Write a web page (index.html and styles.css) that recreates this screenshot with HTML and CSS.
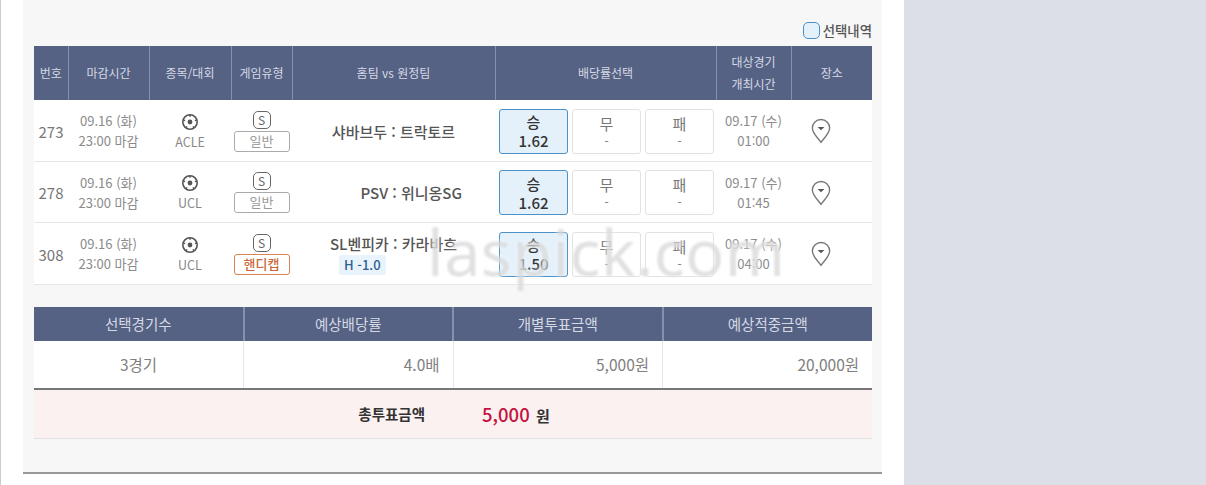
FILE: index.html
```html
<!DOCTYPE html>
<html lang="ko">
<head>
    <meta charset="UTF-8">
    <meta name="viewport" content="width=device-width, initial-scale=1.0">
    <title>선택내역</title>
    <link rel="stylesheet" href="styles.css">
</head>
<body>
    <svg class="svg-defs" width="0" height="0">
        <symbol id="ball" viewBox="0 0 18 18">
            <circle cx="9" cy="9" r="7.2" fill="none" stroke="#555" stroke-width="1.6"/>
            <circle cx="9" cy="9" r="2.4" fill="#555"/>
            <path d="M9 1.8v2M2.2 7l1.9.6M15.8 7l-1.9.6M4.8 15l1.2-1.6M13.2 15L12 13.4" stroke="#555" stroke-width="1.5"/>
        </symbol>
        <symbol id="pin" viewBox="0 0 22 28">
            <path d="M11 26.5C7 21 1.5 16.500 1.500 10.800A9.500 9.500 0 0 1 20.500 10.800C20.500 16.500 15 21 11 26.500Z" fill="none" stroke="#777" stroke-width="1.500"/>
            <path d="M7.200 9.500h7.600L11 13.200Z" fill="#555"/>
        </symbol>
    </svg>

    <div class="page">
        <div class="panel">
            <div class="legend"><span class="legend-box"></span>선택내역</div>

            <table class="games">
                <thead>
                    <tr>
                        <th class="c-no">번호</th>
                        <th class="c-close">마감시간</th>
                        <th class="c-league">종목/대회</th>
                        <th class="c-type">게임유형</th>
                        <th class="c-teams">홈팀 vs 원정팀</th>
                        <th class="c-odds">배당률선택</th>
                        <th class="c-date">대상경기<br>개최시간</th>
                        <th class="c-place">장소</th>
                    </tr>
                </thead>
                <tbody>
                    <tr>
                        <td class="num">273</td>
                        <td class="times">09.16 (화)<br>23:00 마감</td>
                        <td class="league"><svg class="ball"><use href="#ball"/></svg><div>ACLE</div></td>
                        <td class="type"><span class="s-mark">S</span><span class="tag">일반</span></td>
                        <td class="teams">샤바브두 : 트락토르</td>
                        <td class="odds">
                            <div class="odds-row">
                                <div class="pick on"><b>승</b><b>1.62</b></div>
                                <div class="pick"><span>무</span><span class="dash">-</span></div>
                                <div class="pick"><span>패</span><span class="dash">-</span></div>
                            </div>
                        </td>
                        <td class="times">09.17 (수)<br>01:00</td>
                        <td class="place"><svg class="pin"><use href="#pin"/></svg></td>
                    </tr>
                    <tr>
                        <td class="num">278</td>
                        <td class="times">09.16 (화)<br>23:00 마감</td>
                        <td class="league"><svg class="ball"><use href="#ball"/></svg><div>UCL</div></td>
                        <td class="type"><span class="s-mark">S</span><span class="tag">일반</span></td>
                        <td class="teams teams-right">PSV : 위니옹SG</td>
                        <td class="odds">
                            <div class="odds-row">
                                <div class="pick on"><b>승</b><b>1.62</b></div>
                                <div class="pick"><span>무</span><span class="dash">-</span></div>
                                <div class="pick"><span>패</span><span class="dash">-</span></div>
                            </div>
                        </td>
                        <td class="times">09.17 (수)<br>01:45</td>
                        <td class="place"><svg class="pin"><use href="#pin"/></svg></td>
                    </tr>
                    <tr class="row-last">
                        <td class="num">308</td>
                        <td class="times">09.16 (화)<br>23:00 마감</td>
                        <td class="league"><svg class="ball"><use href="#ball"/></svg><div>UCL</div></td>
                        <td class="type"><span class="s-mark">S</span><span class="tag tag-hc">핸디캡</span></td>
                        <td class="teams teams-hc">
                            <div>SL벤피카 : 카라바흐</div>
                            <div class="hc-wrap"><span class="hc">H -1.0</span></div>
                        </td>
                        <td class="odds">
                            <div class="odds-row">
                                <div class="pick on"><b>승</b><b>1.50</b></div>
                                <div class="pick"><span>무</span><span class="dash">-</span></div>
                                <div class="pick"><span>패</span><span class="dash">-</span></div>
                            </div>
                        </td>
                        <td class="times">09.17 (수)<br>04:00</td>
                        <td class="place"><svg class="pin"><use href="#pin"/></svg></td>
                    </tr>
                </tbody>
            </table>

            <table class="summary">
                <thead>
                    <tr>
                        <th>선택경기수</th>
                        <th>예상배당률</th>
                        <th>개별투표금액</th>
                        <th>예상적중금액</th>
                    </tr>
                </thead>
                <tbody>
                    <tr>
                        <td class="center">3경기</td>
                        <td>4.0배</td>
                        <td>5,000원</td>
                        <td>20,000원</td>
                    </tr>
                </tbody>
            </table>

            <div class="total">
                <span class="total-label">총투표금액</span>
                <span class="total-value"><em>5,000</em> 원</span>
            </div>
        </div>
        <div class="sidebar"></div>
    </div>

    <div class="watermark">laspick.com</div>
</body>
</html>
```

FILE: styles.css
```css
html, body {
    margin: 0;
    height: 485px;
    overflow: hidden;
    background: #fff;
}
body {
    font-family: "Noto Sans CJK KR", "Noto Sans", sans-serif;
    font-size: 13px;
    color: #777;
    position: relative;
}
.svg-defs {
    position: absolute;
}
.page {
    display: flex;
    align-items: flex-start;
    height: 485px;
    border-left: 1px solid #ccc;
    padding-left: 22px;
    box-sizing: border-box;
}
.panel {
    width: 859px;
    height: 474px;
    box-sizing: border-box;
    flex: none;
    padding: 21px 10px 0 11px;
    background: #f7f7f7;
    border-bottom: 2px solid #999;
}
.sidebar {
    flex: 1;
    height: 485px;
    margin-left: 22px;
    background: #dcdfe8;
}
.legend {
    display: flex;
    justify-content: flex-end;
    align-items: center;
    gap: 3px;
    height: 18px;
    margin-bottom: 7px;
    font-size: 13.400px;
    font-weight: 500;
    color: #555;
}
.legend-box {
    width: 15px;
    height: 15px;
    border: 1.500px solid #4b91c7;
    border-radius: 5px;
    background: #e4f1fb;
}
table {
    border-collapse: collapse;
    table-layout: fixed;
    width: 838px;
}
th, td {
    box-sizing: border-box;
}
th {
    background: #556284;
    color: #d5d9e4;
    font-size: 12px;
    font-weight: 400;
    border-right: 1px solid #8391ad;
    padding: 0;
}
th:last-child {
    border-right: 0;
}
.games thead tr {
    height: 54px;
}
.games th {
    line-height: 22px;
}
.c-no { width: 34px; }
.c-close { width: 81px; }
.c-league { width: 82px; }
.c-type { width: 61px; }
.c-teams { width: 203px; }
.c-odds { width: 221px; }
.c-date { width: 75px; }
.c-place { width: 81px; }

.games tbody tr {
    height: 61px;
    background: #fff;
    border-bottom: 1px solid #e6e6e6;
}
.games tbody .row-last {
    height: 62px;
}
.games td {
    padding: 2px 0 0;
    text-align: center;
    vertical-align: middle;
}
.num {
    font-size: 15px;
    color: #777;
}
.times {
    font-size: 13px;
    line-height: 20px;
    color: #8a8a8a;
}
.league {
    font-size: 12.500px;
    line-height: 16px;
    color: #888;
}
.league div {
    margin-top: 3px;
}
.ball {
    display: block;
    width: 18px;
    height: 18px;
    margin: 0 auto;
}
.type {
    line-height: 1;
}
.s-mark {
    display: block;
    width: 16px;
    height: 16px;
    margin: 0 auto 2px;
    border: 1.500px solid #666;
    border-radius: 5px;
    font-size: 12px;
    line-height: 16px;
    color: #666;
}
.tag {
    display: block;
    box-sizing: border-box;
    width: 56px;
    height: 21px;
    margin: 0 auto;
    border: 1.500px solid #aaa;
    border-radius: 3px;
    font-size: 13px;
    line-height: 18px;
    color: #999;
}
.tag-hc {
    border-color: #d9824f;
    color: #c9673a;
    font-weight: 500;
}
.games .teams {
    font-size: 15px;
    font-weight: 500;
    color: #555;
}
.games .teams-right {
    padding-right: 33px;
    text-align: right;
}
.teams-hc {
    line-height: 19px;
}
.hc-wrap {
    text-align: left;
    padding-left: 47px;
    margin-top: 1px;
}
.hc {
    display: inline-block;
    padding: 0 5px;
    height: 20px;
    line-height: 20px;
    background: #e8f3fb;
    border-radius: 3px;
    color: #2d5f8f;
    font-size: 13px;
}
.odds-row {
    display: flex;
    justify-content: center;
    gap: 4px;
    padding-left: 2px;
}
.pick {
    width: 69px;
    height: 45px;
    box-sizing: border-box;
    display: flex;
    flex-direction: column;
    justify-content: center;
    background: #fff;
    border: 1px solid #e2e2e2;
    border-radius: 3px;
    font-size: 15px;
    line-height: 19px;
    color: #777;
}
.pick b {
    font-weight: 500;
    color: #333;
}
.pick.on {
    background: #e4f1fb;
    border-color: #4b91c7;
    border-width: 1.500px;
}
.dash {
    font-size: 12px;
    line-height: 16px;
}
.pin {
    display: block;
    width: 20px;
    height: 26px;
    margin: 0 auto;
    transform: translateX(-11px);
}

.summary {
    margin-top: 22px;
}
.summary thead tr {
    height: 34px;
}
.summary th {
    font-size: 14.500px;
    border-right-width: 2px;
}
.summary td {
    height: 48px;
    padding: 0 13px;
    background: #fff;
    text-align: right;
    font-size: 15.500px;
    color: #808080;
    border-right: 1px solid #e6e6e6;
    border-bottom: 2px solid #777;
}
.summary td:last-child {
    border-right: 0;
}
.summary .center {
    text-align: center;
}
.total {
    display: flex;
    width: 838px;
    height: 48px;
    align-items: center;
    background: #fbf1f1;
    border-bottom: 1px solid #e2e2e2;
    font-size: 15px;
    font-weight: 700;
    color: #333;
}
.total-label {
    width: 391px;
    text-align: right;
    font-size: 14.500px;
}
.total-value {
    margin-left: 57px;
}
.total-value em {
    font-style: normal;
    font-size: 18.500px;
    font-weight: 500;
    color: #c4123f;
    margin-right: 2px;
}
.watermark {
    position: absolute;
    left: 427px;
    top: 211px;
    font-family: "Noto Sans", sans-serif;
    font-size: 64.500px;
    line-height: 80px;
    letter-spacing: 0.500px;
    color: rgba(205, 205, 205, 0.6);
    text-shadow: 0 0 4px rgba(255, 255, 255, 0.8);
    filter: blur(1px);
    pointer-events: none;
}
```
